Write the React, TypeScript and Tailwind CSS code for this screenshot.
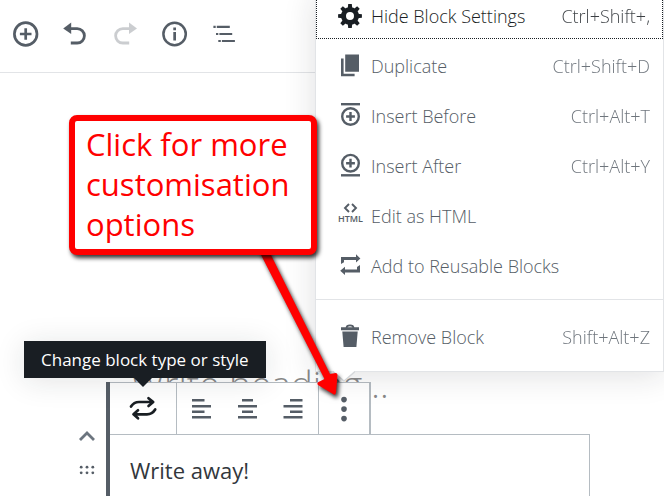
import type { ReactNode } from 'react'
import clsx from 'clsx'

const toolbarIcons: { label: string; disabled?: boolean; icon: ReactNode }[] = [
    {
        label: 'Add block',
        icon: (
            <g fill="none" stroke="currentColor" strokeWidth="2.7">
                <circle cx="13.7" cy="13" r="11.3" />
                <path d="M13.7 7.2v11.6M7.9 13h11.6" />
            </g>
        ),
    },
    {
        label: 'Undo',
        icon: (
            <>
                <path d="M1.2 7.4 9.2 1.6v11.4z" fill="currentColor" />
                <path
                    d="M8 7.6h7.2a7.1 7.1 0 0 1 0 14.4H8.8"
                    fill="none"
                    stroke="currentColor"
                    strokeWidth="2.8"
                />
            </>
        ),
    },
    {
        label: 'Redo',
        disabled: true,
        icon: (
            <g transform="translate(26 0) scale(-1 1)">
                <path d="M1 7.4 9 1.6v11.4z" fill="currentColor" />
                <path
                    d="M8 7.6h7.2a7.1 7.1 0 0 1 0 14.4H8.8"
                    fill="none"
                    stroke="currentColor"
                    strokeWidth="2.8"
                />
            </g>
        ),
    },
    {
        label: 'Content structure',
        icon: (
            <>
                <circle
                    cx="12.6"
                    cy="13"
                    r="11.2"
                    fill="none"
                    stroke="currentColor"
                    strokeWidth="2.5"
                />
                <path
                    d="M11.3 11h2.7v8.6h-2.7zM11.3 6.6h2.7v2.6h-2.7z"
                    fill="currentColor"
                />
            </>
        ),
    },
    {
        label: 'Block navigation',
        icon: (
            <path
                d="M1.4 4.8h2.3V7H1.4zM4.8 4.8h13V7h-13zM4 11.9h2.3v2.2H4zM7.4 11.9h12.8v2.2H7.4zM6.3 18.9h2.5v2.2H6.3zM9.9 18.9h13v2.2h-13z"
                fill="currentColor"
            />
        ),
    },
]

const gearTeeth = [0, 45, 90, 135, 180, 225, 270, 315]

const menuItems: {
    label: string
    shortcut?: string
    focused?: boolean
    icon: ReactNode
}[] = [
    {
        label: 'Hide Block Settings',
        shortcut: 'Ctrl+Shift+,',
        focused: true,
        icon: (
            <>
                <circle
                    cx="13"
                    cy="13"
                    r="6.5"
                    fill="none"
                    stroke="currentColor"
                    strokeWidth="5"
                />
                {gearTeeth.map((deg) => (
                    <path
                        key={deg}
                        d="M10.7 6 11.2 1.1h3.6l.5 4.9z"
                        fill="currentColor"
                        transform={`rotate(${deg} 13 13)`}
                    />
                ))}
            </>
        ),
    },
    {
        label: 'Duplicate',
        shortcut: 'Ctrl+Shift+D',
        icon: (
            <path
                d="M8.2 1.6H22v17.2H8.2zM4 5.5h2.6v15.2h11v2.5H4z"
                fill="currentColor"
            />
        ),
    },
    {
        label: 'Insert Before',
        shortcut: 'Ctrl+Alt+T',
        icon: (
            <g fill="none" stroke="currentColor" strokeWidth="2.4">
                <path d="M4 1.2h19" />
                <circle cx="13.5" cy="13.5" r="8.3" />
                <path d="M13.5 9.1v8.8M9.1 13.5h8.8" />
            </g>
        ),
    },
    {
        label: 'Insert After',
        shortcut: 'Ctrl+Alt+Y',
        icon: (
            <g fill="none" stroke="currentColor" strokeWidth="2.4">
                <path d="M4 22.3h19" />
                <circle cx="13.5" cy="10.2" r="8.3" />
                <path d="M13.5 5.8v8.8M9.1 10.2h8.8" />
            </g>
        ),
    },
    {
        label: 'Edit as HTML',
        icon: (
            <>
                <path
                    d="m12 1-4 4 4 4M15 1l4 4-4 4"
                    fill="none"
                    stroke="currentColor"
                    strokeWidth="1.9"
                />
                <text
                    x="13.5"
                    y="19"
                    fontSize="9"
                    fontWeight="600"
                    textAnchor="middle"
                    fill="currentColor"
                >
                    HTML
                </text>
            </>
        ),
    },
    {
        label: 'Add to Reusable Blocks',
        icon: (
            <path
                d="M4 11V4h15V1.2l4.4 4.2L19 9.6V7H7v2.2zM23 12v7.4H8V22l-4.8-4.2L8 13.7v2.7h12V14z"
                fill="currentColor"
            />
        ),
    },
]

const alignments = [
    {
        label: 'Align left',
        path: 'M3 3h12.5v2.6H3zM3 9h19v2.6H3zM3 14.4h12.5V17H3zM3 20h19v2.6H3z',
    },
    {
        label: 'Align center',
        path: 'M7 3h11v2.6H7zM3 9h19v2.6H3zM7 14.4h11V17H7zM3 20h19v2.6H3z',
    },
    {
        label: 'Align right',
        path: 'M9 3h12.5v2.6H9zM2.5 9h19v2.6h-19zM9 14.4h12.5V17H9zM2.5 20h19v2.6h-19z',
    },
]

function Icon({ children }: { children: ReactNode }) {
    return (
        <svg
            viewBox="0 0 26 26"
            className="w-[26px] h-[26px] shrink-0 overflow-visible"
            aria-hidden="true"
        >
            {children}
        </svg>
    )
}

function MenuItem({
    label,
    shortcut,
    focused,
    icon,
}: {
    label: string
    shortcut?: string
    focused?: boolean
    icon: ReactNode
}) {
    return (
        <button
            type="button"
            role="menuitem"
            className={clsx(
                'flex h-[46px] w-full items-center border border-dotted pl-5 pr-3 text-[18px] font-light',
                focused
                    ? 'border-[#191e23] text-[#191e23]'
                    : 'border-transparent text-[#555d66]',
            )}
        >
            <Icon>{icon}</Icon>
            <span className="ml-2 whitespace-nowrap">{label}</span>
            {shortcut && (
                <span className="ml-auto whitespace-nowrap opacity-85">
                    {shortcut}
                </span>
            )}
        </button>
    )
}

function SettingsMenu() {
    return (
        <div
            role="menu"
            className="absolute -top-2 left-[315px] right-0 border border-[#e2e4e7] bg-white shadow-[0_3px_30px_rgba(25,30,35,0.14)]"
        >
            <div className="flex flex-col gap-1 pb-2.5">
                {menuItems.map((item) => (
                    <MenuItem key={item.label} {...item} />
                ))}
            </div>
            <div className="border-t border-[#e2e4e7] pb-[11px] pt-3.5">
                <MenuItem
                    label="Remove Block"
                    shortcut="Shift+Alt+Z"
                    icon={
                        <>
                            <path
                                d="M9.5 4c0-3.4 7-3.4 7 0"
                                fill="none"
                                stroke="currentColor"
                                strokeWidth="1.7"
                            />
                            <path
                                d="M4 3.2h18v3H4zM5.3 7.6h15.4L19.4 23H6.6z"
                                fill="currentColor"
                            />
                        </>
                    }
                />
            </div>
            <svg
                viewBox="0 0 22 11"
                className="absolute left-[17px] top-full h-[11px] w-[22px]"
                aria-hidden="true"
            >
                <path d="M0-1h22v1L11 10 0 0z" fill="#fff" />
                <path
                    d="M0 .5 11 10 22 .5"
                    fill="none"
                    stroke="#d5d8db"
                    strokeWidth="1.4"
                />
            </svg>
        </div>
    )
}

function BlockToolbar() {
    return (
        <div className="relative flex h-[52px] w-fit divide-x divide-[#b5bcc2] border-r border-t border-[#b5bcc2] bg-white text-[#555d66]">
            <button
                type="button"
                aria-label="Change block type or style"
                className="flex w-[67px] items-center justify-center text-[#191e23]"
            >
                <Icon>
                    <g
                        fill="none"
                        stroke="currentColor"
                        strokeWidth="2.7"
                        strokeLinecap="round"
                        strokeLinejoin="round"
                    >
                        <path d="M1 10.5C3.5 6.5 6 6 9 6h14M18.5 2.2 23.2 6l-4.7 4" />
                        <path d="M25.2 13.5C22.7 17.5 20 18.3 17 18.3H4M8 14.3 3.5 18.3 8 22.3" />
                    </g>
                </Icon>
            </button>
            <div className="flex w-[142px] items-center justify-center gap-5">
                {alignments.map(({ label, path }) => (
                    <button key={label} type="button" aria-label={label}>
                        <Icon>
                            <path d={path} fill="currentColor" />
                        </Icon>
                    </button>
                ))}
            </div>
            <button
                type="button"
                aria-label="More options"
                className="flex w-[51px] items-center justify-center"
            >
                <Icon>
                    <g fill="currentColor">
                        <circle cx="13" cy="3.6" r="2.8" />
                        <circle cx="13" cy="13.1" r="2.8" />
                        <circle cx="13" cy="22.6" r="2.8" />
                    </g>
                </Icon>
            </button>
            <div
                role="tooltip"
                className="absolute -left-[86px] bottom-full mb-[5px] whitespace-nowrap bg-[#191e23] px-[17px] py-1.5 text-[17px] leading-[25px] text-white shadow-[0_3px_30px_rgba(25,30,35,0.12)]"
            >
                Change block type or style
                <span className="absolute left-[110px] top-full border-x-[9px] border-t-[9px] border-x-transparent border-t-[#191e23]" />
            </div>
        </div>
    )
}

function Callout() {
    return (
        <div className="absolute left-[69px] top-[115px]">
            <svg
                viewBox="0 0 90 150"
                className="absolute left-[188px] top-[134px] h-[150px] w-[90px] overflow-visible drop-shadow-[2px_3px_2px_rgba(0,0,0,0.8)]"
                aria-hidden="true"
            >
                <path
                    d="M1 0h10L73 125l5.5-1q2 0 2 2l-1.5 18q-1 3-3 1L61 136q-1.5-2 .5-3l6-3z"
                    fill="#f00"
                />
            </svg>
            <p className="relative w-[248px] rounded-lg border-6 border-[#f00] bg-white pb-[5px] pl-[11px] pt-[3px] text-[31px] leading-[40px] text-[#f00] shadow-[2px_3px_4px_rgba(0,0,0,0.8)]">
                Click for more customisation options
            </p>
        </div>
    )
}

export default function App() {
    return (
        <div className="relative flex min-h-screen flex-col overflow-hidden bg-white font-['Open_Sans','Noto_Sans',sans-serif]">
            <header className="flex h-[73px] items-center border-b border-[#e2e4e7] pb-1">
                {toolbarIcons.map(({ label, disabled, icon }) => (
                    <button
                        key={label}
                        type="button"
                        aria-label={label}
                        disabled={disabled}
                        className="flex w-[50px] justify-center text-[#555d66] disabled:opacity-30"
                    >
                        <Icon>{icon}</Icon>
                    </button>
                ))}
            </header>

            <main className="flex flex-1 flex-col pt-[287px]">
                <h2 className="-mb-[26px] pl-[131px] text-[37px] font-light leading-[48px] text-[#888]">
                    Write heading…
                </h2>
                <div className="flex flex-1 pr-[74px]">
                    <div className="flex w-[106px] flex-col items-end gap-[22px] pr-[10px] pt-12 text-[#6c757f]">
                        <button type="button" aria-label="Move up">
                            <svg viewBox="0 0 18 12" className="h-3 w-[18px]">
                                <path
                                    d="m2 10 7-7 7 7"
                                    fill="none"
                                    stroke="currentColor"
                                    strokeWidth="2.8"
                                />
                            </svg>
                        </button>
                        <button type="button" aria-label="Drag block">
                            <svg viewBox="0 0 18 12" className="h-3 w-[18px]">
                                <g fill="#555d66">
                                    <circle cx="3.2" cy="3.2" r="1.4" />
                                    <circle cx="9" cy="3.2" r="1.4" />
                                    <circle cx="14.8" cy="3.2" r="1.4" />
                                    <circle cx="3.2" cy="8.8" r="1.4" />
                                    <circle cx="9" cy="8.8" r="1.4" />
                                    <circle cx="14.8" cy="8.8" r="1.4" />
                                </g>
                            </svg>
                        </button>
                    </div>
                    <section className="flex flex-1 flex-col border-l-4 border-[#555d66]">
                        <BlockToolbar />
                        <p className="flex-1 border-r border-t border-[#b5bcc2] bg-white px-5 pt-[19px] text-[22px] leading-8 text-[#32373c]">
                            Write away!
                        </p>
                    </section>
                </div>
            </main>

            <SettingsMenu />
            <Callout />
        </div>
    )
}
